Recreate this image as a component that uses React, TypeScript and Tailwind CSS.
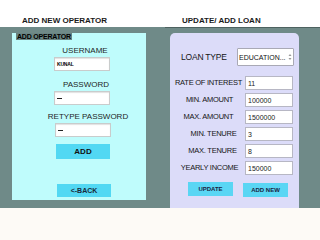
const font = "font-['Liberation_Sans',Arial,sans-serif]"

function OpField({ children }: { children?: React.ReactNode }) {
  return (
    <div className="mt-[1px] flex h-[14px] w-[56px] items-center border border-[#c9cccc] bg-white pl-[2px] shadow-[inset_0_1px_1px_rgba(0,0,0,0.12)]">
      {children}
    </div>
  )
}

function PwDots() {
  return <div className="h-[1px] w-[5px] bg-[#222]" />
}

const loanRows = [
  { label: 'RATE OF INTEREST', value: '11', shift: 'pl-[2px]' },
  { label: 'MIN. AMOUNT', value: '100000', shift: 'pl-[4px]' },
  { label: 'MAX. AMOUNT', value: '1500000', shift: 'pl-[2px]' },
  { label: 'MIN. TENURE', value: '3', shift: 'pl-[12px]' },
  { label: 'MAX. TENURE', value: '8', shift: 'pl-[10px]' },
  { label: 'YEARLY INCOME', value: '150000', shift: 'pl-[4px]' },
]

export default function App() {
  return (
    <div className={`h-[240px] w-[320px] overflow-hidden bg-[#fdfaf6] ${font}`}>
      {/* titles */}
      <div className="flex h-[27px] bg-white pt-[16px] text-[8px] font-bold leading-[10px] text-[#1a1a1a]">
        <div className="w-[160px] pl-[22px]">ADD NEW OPERATOR</div>
        <div className="pl-[22px]">UPDATE/ ADD LOAN</div>
      </div>

      <div className="flex h-[181px] bg-[#6f8a88]">
        {/* add operator */}
        <div className="w-[165px] pl-[12px] pt-[6px]">
          <div className="flex h-[167px] w-[134px] flex-col bg-[#bffcfc]">
            <div className="ml-[4px] self-start bg-[#6a8583] px-[1px] text-[7px] font-bold leading-[7px] tracking-[-0.2px] text-black">
              ADD OPERATOR
            </div>
            <div className="flex flex-col items-center pl-[6px] pt-[6px] text-[#1e1e1e]">
              <div className="ml-[6px] text-[8px] leading-[10px]">USERNAME</div>
              <OpField>
                <span className="text-[5px] font-bold leading-none tracking-[-0.2px] text-black">KUNAL</span>
              </OpField>
              <div className="ml-[8px] mt-[9px] text-[8px] leading-[10px]">PASSWORD</div>
              <OpField>
                <PwDots />
              </OpField>
              <div className="ml-[12px] mt-[7px] text-[8px] leading-[10px]">RETYPE PASSWORD</div>
              <div className="ml-[2px]">
                <OpField>
                  <PwDots />
                </OpField>
              </div>
              <button className="ml-[2px] mt-[7px] flex h-[15px] w-[54px] items-center justify-center bg-[#52d8f3] text-[8px] font-bold leading-none text-[#111]">
                ADD
              </button>
              <button className="ml-[4px] mt-[25px] flex h-[13px] w-[54px] items-center justify-center bg-[#52d8f3] text-[7px] font-bold leading-none text-[#1a2a3a]">
                &lt;-BACK
              </button>
            </div>
          </div>
        </div>

        {/* update / add loan */}
        <div className="flex-1 border-t border-[#4d6260]">
          <div className="ml-[5px] mt-[5px] h-[175px] w-[129px] rounded-t-[5px] bg-[#dcdcf9] pt-[15px]">
            <div className="flex h-[18px] items-center pl-[11px] pr-[5px]">
              <span className="text-[8.5px] leading-none tracking-[-0.2px] text-[#151515]">LOAN TYPE</span>
              <div className="ml-auto flex h-[18px] w-[57px] items-center justify-between rounded-[1px] border border-[#a9a9b5] bg-white pl-[1px] pr-[1px]">
                <span className="text-[7px] leading-none text-[#111]">EDUCATION...</span>
                <svg width="4" height="8" viewBox="0 0 4 8" className="text-[#999]">
                  <path d="M0.5 3 L2 1 L3.5 3 Z M0.5 5 L2 7 L3.5 5 Z" fill="currentColor" />
                </svg>
              </div>
            </div>
            <div className="mt-[10px] flex flex-col gap-[3px]">
              {loanRows.map((r) => (
                <div key={r.label} className="flex h-[14px] items-center">
                  <div className={`w-[75px] text-center text-[7.5px] leading-none tracking-[-0.25px] text-[#151515] ${r.shift}`}>
                    {r.label}
                  </div>
                  <div className="flex h-[14px] w-[48px] items-center border border-[#b7b7c4] bg-white pl-[2px] text-[7px] leading-none text-[#222]">
                    {r.value}
                  </div>
                </div>
              ))}
            </div>
            <div className="mt-[7px] flex gap-[10px] pl-[18px]">
              <button className="flex h-[14px] w-[45px] items-center justify-center bg-[#5ad6f4] text-[6px] font-bold leading-none text-[#1b2340]">
                UPDATE
              </button>
              <button className="mt-[1px] flex h-[14px] w-[45px] items-center justify-center bg-[#5ad6f4] text-[6px] font-bold leading-none text-[#1b2340]">
                ADD NEW
              </button>
            </div>
          </div>
        </div>
      </div>
    </div>
  )
}
